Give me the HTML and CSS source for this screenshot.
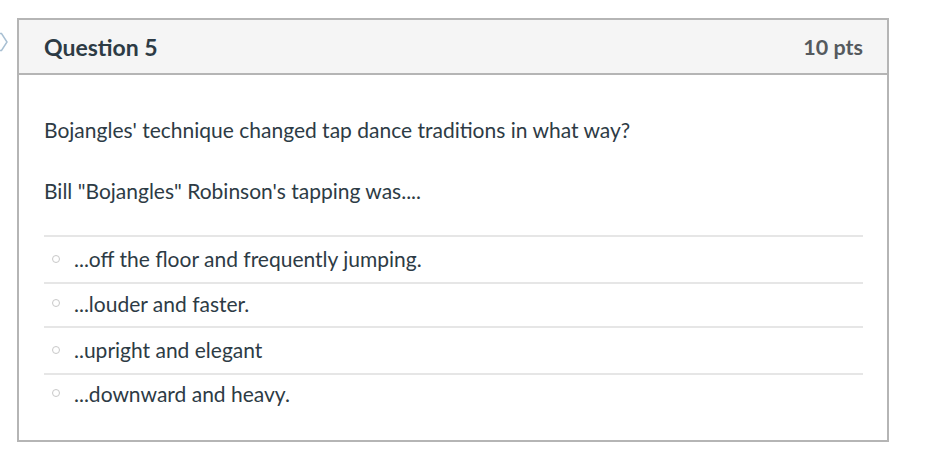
FILE: index.html
```html
<!DOCTYPE html>
<html>
<head>
<meta charset="utf-8">
<link rel="stylesheet" href="styles.css">
</head>
<body>
<div class="page">
  <div class="flag">
    <svg width="10" height="20" viewBox="0 0 10 20"><path d="M-6 1.5 H1.5 L7 10 L1.5 18.5 H-6" fill="none" stroke="#a9c0d3" stroke-width="1.5"/></svg>
  </div>
  <div class="card">
    <div class="card-header">
      <span class="q-title">Question 5</span>
      <span class="q-pts">10 pts</span>
    </div>
    <div class="card-body">
      <p class="q-text">Bojangles' technique changed tap dance traditions in what way?</p>
      <p class="q-text second">Bill "Bojangles" Robinson's tapping was....</p>
      <ul class="answers">
        <li class="answer"><span class="radio"></span>...off the floor and frequently jumping.</li>
        <li class="answer"><span class="radio"></span>...louder and faster.</li>
        <li class="answer"><span class="radio"></span>..upright and elegant</li>
        <li class="answer"><span class="radio"></span>...downward and heavy.</li>
      </ul>
    </div>
  </div>
</div>
</body>
</html>
```

FILE: styles.css
```css
html, body {
  margin: 0;
  padding: 0;
  background: #fff;
}
body {
  font-family: Lato, "Liberation Sans", sans-serif;
  color: #2d3b45;
}
.page {
  display: flex;
  align-items: flex-start;
  padding-top: 18px;
}
.flag {
  width: 17px;
  padding-top: 14px;
}
.flag svg {
  display: block;
}
.card {
  width: 868px;
  border: 2px solid #b5b5b5;
}
.card-header {
  display: flex;
  justify-content: space-between;
  align-items: center;
  height: 55px;
  box-sizing: border-box;
  background: #f5f5f5;
  border-bottom: 2px solid #b5b5b5;
  padding: 0 24px 0 25px;
}
.q-title {
  font-size: 23px;
  font-weight: 700;
  color: #2d3b45;
}
.q-pts {
  font-size: 21.5px;
  font-weight: 700;
  color: #555a5e;
}
.card-body {
  padding: 41px 24px 25px 25px;
}
.q-text {
  margin: 0;
  font-size: 21px;
  line-height: 28px;
}
.q-text.second {
  margin-top: 33px;
}
.answers {
  list-style: none;
  margin: 30px 0 0 0;
  padding: 0;
}
.answer {
  display: flex;
  align-items: center;
  box-sizing: border-box;
  height: 47px;
  padding-bottom: 2px;
  border-top: 2px solid #e6e6e6;
  font-size: 21px;
  padding-left: 8px;
}
.answer:nth-child(2) {
  height: 44px;
  padding-bottom: 4px;
}
.answer:nth-child(4) {
  height: 42px;
  padding-bottom: 4px;
}
.radio {
  width: 6px;
  height: 6px;
  border: 1px solid #c8c8c8;
  border-radius: 50%;
  margin-right: 14px;
  flex: none;
}
```
